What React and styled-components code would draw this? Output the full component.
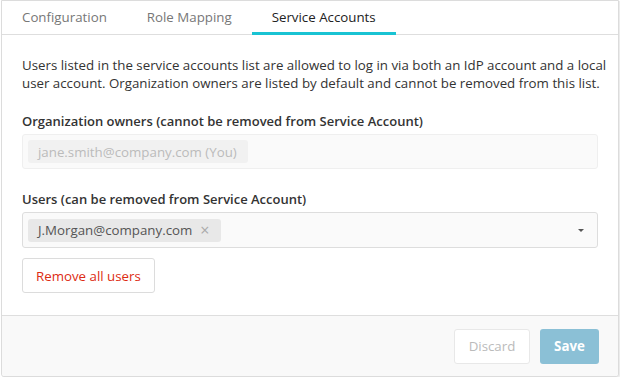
import styled, { createGlobalStyle } from "styled-components";

const GlobalStyle = createGlobalStyle`
  body {
    margin: 0;
    background: #fff;
    font-family: "Open Sans", "Liberation Sans", sans-serif;
    font-size: 13.3px;
    color: #333;
  }
`

const Card = styled.div`
  margin-left: 1px;
  width: 618px;
  height: 377px;
  box-sizing: border-box;
  border: 1px solid #dcdcdc;
  border-radius: 0 0 3px 3px;
  box-shadow: 1px 1px 0 #ececec;
  display: flex;
  flex-direction: column;
  background: #fff;
`

const Tabs = styled.ul`
  list-style: none;
  margin: 0;
  padding: 0;
  display: flex;
  height: 33px;
  border-bottom: 1px solid #dedede;
`

const Tab = styled.li`
  padding: 0 20px;
  line-height: 33px;
  color: ${p => (p.active ? "#222" : "#777")};
  box-shadow: ${p => (p.active ? "inset 0 -3px 0 #19c3d3" : "none")};
  margin-bottom: -1px;
  height: 34px;
  box-sizing: border-box;
`

const Body = styled.div`
  padding: 21px 20px 0;
  flex: 1;
  border-bottom: 1px solid #dedede;
`

const Intro = styled.p`
  margin: 0 0 20px;
  line-height: 18px;
  white-space: nowrap;
`

const Label = styled.div`
  font-size: 13px;
  font-weight: 600;
  line-height: 18px;
  margin-bottom: 4px;
`

const Field = styled.div`
  height: ${p => (p.disabled ? 35 : 36)}px;
  box-sizing: border-box;
  display: flex;
  align-items: center;
  padding: 0 5px;
  border: 1px solid ${p => (p.disabled ? "#efefef" : "#dddddd")};
  border-radius: 3px;
  background: #fafafa;
  margin-bottom: ${p => p.gap || 0}px;
`

const Chip = styled.span`
  display: inline-flex;
  align-items: center;
  height: 23px;
  padding: 0 11px 0 10px;
  border-radius: 3px;
  background: ${p => (p.disabled ? "#f1f1f1" : "#e8e8e8")};
  color: ${p => (p.disabled ? "#bbb" : "#555")};
`

const ChipClose = styled.span`
  margin-left: 8px;
  color: #aaa;
  font-size: 16px;
  line-height: 1;
`

const Caret = styled.span`
  margin-left: auto;
  margin-right: 8px;
  width: 0;
  height: 0;
  border-left: 3px solid transparent;
  border-right: 3px solid transparent;
  border-top: 3px solid #555;
`

const Button = styled.button`
  height: 35px;
  box-sizing: border-box;
  padding: 0 13px;
  border-radius: 3px;
  font-family: inherit;
  font-size: 13.3px;
  cursor: pointer;
`

const RemoveButton = styled(Button)`
  margin-top: 10px;
  background: #fff;
  border: 1px solid #dcdcdc;
  color: #dd2b12;
`

const Footer = styled.div`
  background: #f9f9f9;
  height: 60px;
  display: flex;
  justify-content: flex-end;
  align-items: center;
  gap: 10px;
  padding: 0 19px 0 0;
  border-radius: 0 0 3px 3px;
`

const DiscardButton = styled(Button)`
  width: 76px;
  background: #fff;
  border: 1px solid #e8e8e8;
  color: #bbb;
`

const SaveButton = styled(Button)`
  width: 59px;
  background: #8bc0d6;
  border: none;
  color: #fff;
  font-weight: 700;
`

const App = () => {
  return (
    <>
      <GlobalStyle />
      <Card>
        <Tabs>
          <Tab>Configuration</Tab>
          <Tab>Role Mapping</Tab>
          <Tab active>Service Accounts</Tab>
        </Tabs>
        <Body>
          <Intro>
            Users listed in the service accounts list are allowed to log in via both an IdP account and a local
            <br />
            user account. Organization owners are listed by default and cannot be removed from this list.
          </Intro>
          <Label>Organization owners (cannot be removed from Service Account)</Label>
          <Field disabled gap={21}>
            <Chip disabled>jane.smith@company.com (You)</Chip>
          </Field>
          <Label>Users (can be removed from Service Account)</Label>
          <Field>
            <Chip>
              J.Morgan@company.com
              <ChipClose>×</ChipClose>
            </Chip>
            <Caret />
          </Field>
          <RemoveButton>Remove all users</RemoveButton>
        </Body>
        <Footer>
          <DiscardButton>Discard</DiscardButton>
          <SaveButton>Save</SaveButton>
        </Footer>
      </Card>
    </>
  )
}

export default App;
